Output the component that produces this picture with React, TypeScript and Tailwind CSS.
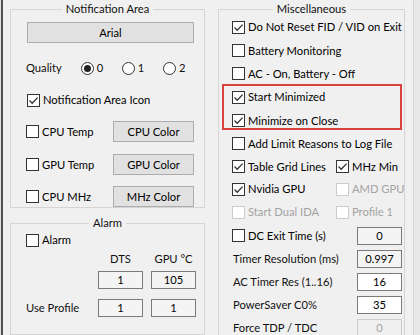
import React from "react";

const Check = ({ checked = false, disabled = false }: { checked?: boolean; disabled?: boolean }) => (
  <span
    className={`relative inline-flex w-[13px] h-[13px] shrink-0 items-center justify-center border bg-white ${
      disabled ? "border-[#cccccc]" : "border-[#333333]"
    }`}
  >
    {checked && (
      <svg width="11" height="11" viewBox="0 0 11 11" className="absolute left-0 top-0">
        <path d="M1.5 5.5 L4.2 8.2 L9.6 2.6" fill="none" stroke="#333" strokeWidth="1.3" />
      </svg>
    )}
  </span>
);

const CheckRow = ({ label, checked = false, disabled = false }: { label: string; checked?: boolean; disabled?: boolean }) => (
  <div className="flex items-center gap-[3px] whitespace-nowrap">
    <Check checked={checked} disabled={disabled} />
    <span className={disabled ? "text-[#a3a3a3]" : "text-black"}>{label}</span>
  </div>
);

const Radio = ({ label, selected = false }: { label: string; selected?: boolean }) => (
  <div className="flex items-center gap-[3px] w-[42px]">
    <span className="w-[13px] h-[13px] rounded-full border border-[#333] bg-white flex items-center justify-center">
      {selected && <span className="w-[7px] h-[7px] rounded-full bg-[#222]" />}
    </span>
    <span>{label}</span>
  </div>
);

const Btn = ({ label, className = "" }: { label: string; className?: string }) => (
  <div
    className={`flex items-center justify-center bg-[#e1e1e1] border border-[#adadad] text-black whitespace-nowrap ${className}`}
  >
    {label}
  </div>
);

const Box = ({ value, variant = "gray" }: { value: string; variant?: "gray" | "white" | "disabled" }) => (
  <div
    className={`w-[45px] h-[18px] shrink-0 flex items-center justify-center border ${
      variant === "white"
        ? "bg-white border-[#7a7a7a] text-black"
        : variant === "disabled"
        ? "bg-[#f0f0f0] border-[#cccccc] text-[#a3a3a3]"
        : "bg-[#f4f4f4] border-[#7a7a7a] text-black"
    }`}
  >
    {value}
  </div>
);

const Group = ({ title, className = "", children }: { title: string; className?: string; children: React.ReactNode }) => (
  <div className={`relative border border-[#d5d5d5] ${className}`}>
    <div className="absolute -top-[9px] left-0 right-0 flex justify-center leading-[16px]">
      <span className="bg-[#f0f0f0] px-[4px] whitespace-nowrap">{title}</span>
    </div>
    {children}
  </div>
);

export default function App() {
  const miscHeights = [24, 23, 23, 24, 23, 23, 23, 22, 24, 23, 23, 23, 23, 23];
  return (
    <div className="w-[420px] h-[335px] overflow-hidden bg-[#f0f0f0] flex text-[11.2px] leading-[16px] text-[#111] font-['Lato','Noto_Sans',sans-serif]">
      <div className="w-[1px] bg-[#e0e0e0]" />
      <div className="w-[2px] bg-[#505050]" />
      <div className="flex pl-[7px] pt-[9px]">
        {/* Left column */}
        <div className="w-[195px] flex flex-col">
          <Group title="Notification Area" className="h-[213px]">
            <div className="flex flex-col pt-[12px]">
              <Btn label="Arial" className="ml-[16px] w-[167px] h-[21px]" />
              <div className="mt-[15px] h-[20px] flex items-center pl-[15px]">
                <span className="w-[56px]">Quality</span>
                <Radio label="0" selected />
                <Radio label="1" />
                <Radio label="2" />
              </div>
              <div className="mt-[12px] h-[20px] flex items-center pl-[16px]">
                <CheckRow label="Notification Area Icon" checked />
              </div>
              {[
                ["CPU Temp", "CPU Color"],
                ["GPU Temp", "GPU Color"],
                ["CPU MHz", "MHz Color"],
              ].map(([l, b], i) => (
                <div key={l} className={`${i === 1 ? "mt-[12px]" : "mt-[11px]"} h-[21px] flex items-center pl-[15px]`}>
                  <div className="w-[87px]">
                    <CheckRow label={l} />
                  </div>
                  <Btn label={b} className="w-[81px] h-[21px]" />
                </div>
              ))}
            </div>
          </Group>
          <Group title="Alarm" className="mt-[15px] h-[140px]">
            <div className="flex flex-col pt-[8px] pl-[15px]">
              <div className="h-[16px] flex items-center">
                <CheckRow label="Alarm" />
              </div>
              <div className="mt-[3px] h-[16px] flex items-center pl-[72px] gap-[8px]">
                <span className="w-[45px] text-center">DTS</span>
                <span className="w-[45px] text-center">GPU °C</span>
              </div>
              <div className="mt-[4px] h-[18px] flex items-center pl-[72px] gap-[8px]">
                <Box value="1" />
                <Box value="105" />
              </div>
              <div className="mt-[10px] h-[18px] flex items-center">
                <span className="w-[72px]">Use Profile</span>
                <div className="flex gap-[8px]">
                  <Box value="1" />
                  <Box value="1" />
                </div>
              </div>
            </div>
          </Group>
        </div>

        {/* Right column */}
        <Group title="Miscellaneous" className="ml-[13px] w-[187px] h-[400px]">
          <div className="flex flex-col pt-[5px] pl-[13px]">
            <div style={{ height: miscHeights[0] }} className="flex items-center">
              <CheckRow label="Do Not Reset FID / VID on Exit" checked />
            </div>
            <div style={{ height: miscHeights[1] }} className="flex items-center">
              <CheckRow label="Battery Monitoring" />
            </div>
            <div style={{ height: miscHeights[2] }} className="flex items-center">
              <CheckRow label="AC - On, Battery - Off" />
            </div>
            <div className="relative">
              <div style={{ height: miscHeights[3] }} className="flex items-center">
                <CheckRow label="Start Minimized" checked />
              </div>
              <div style={{ height: miscHeights[4] }} className="flex items-center">
                <CheckRow label="Minimize on Close" checked />
              </div>
              <div className="absolute -top-[1px] bottom-[2px] -left-[10px] right-[2px] border-2 border-[#d9433f]" />
            </div>
            <div style={{ height: miscHeights[5] }} className="flex items-center">
              <CheckRow label="Add Limit Reasons to Log File" />
            </div>
            <div style={{ height: miscHeights[6] }} className="grid grid-cols-[104px_1fr] items-center">
              <CheckRow label="Table Grid Lines" checked />
              <CheckRow label="MHz Min" checked />
            </div>
            <div style={{ height: miscHeights[7] }} className="grid grid-cols-[104px_1fr] items-center">
              <CheckRow label="Nvidia GPU" checked />
              <CheckRow label="AMD GPU" disabled />
            </div>
            <div style={{ height: miscHeights[8] }} className="grid grid-cols-[104px_1fr] items-center">
              <CheckRow label="Start Dual IDA" disabled />
              <CheckRow label="Profile 1" disabled />
            </div>
            <div style={{ height: miscHeights[9] }} className="flex items-center justify-between pr-[2px]">
              <CheckRow label="DC Exit Time (s)" />
              <Box value="0" />
            </div>
            <div style={{ height: miscHeights[10] }} className="flex items-center justify-between pr-[2px] pl-[1px]">
              <span className="whitespace-nowrap">Timer Resolution (ms)</span>
              <Box value="0.997" />
            </div>
            <div style={{ height: miscHeights[11] }} className="flex items-center justify-between pr-[2px] pl-[1px]">
              <span className="whitespace-nowrap">AC Timer Res (1..16)</span>
              <Box value="16" variant="white" />
            </div>
            <div style={{ height: miscHeights[12] }} className="flex items-center justify-between pr-[2px] pl-[1px]">
              <span className="whitespace-nowrap">PowerSaver C0%</span>
              <Box value="35" variant="white" />
            </div>
            <div style={{ height: miscHeights[13] }} className="flex items-center justify-between pr-[2px] pl-[1px]">
              <span className="whitespace-nowrap">Force TDP / TDC</span>
              <Box value="0" variant="disabled" />
            </div>
          </div>
        </Group>
      </div>
      <div className="w-[8px]" />
      <div className="w-[1px] bg-[#d6d6d6]" />
      <div className="flex-1 bg-[#e8e8e8]" />
    </div>
  );
}
